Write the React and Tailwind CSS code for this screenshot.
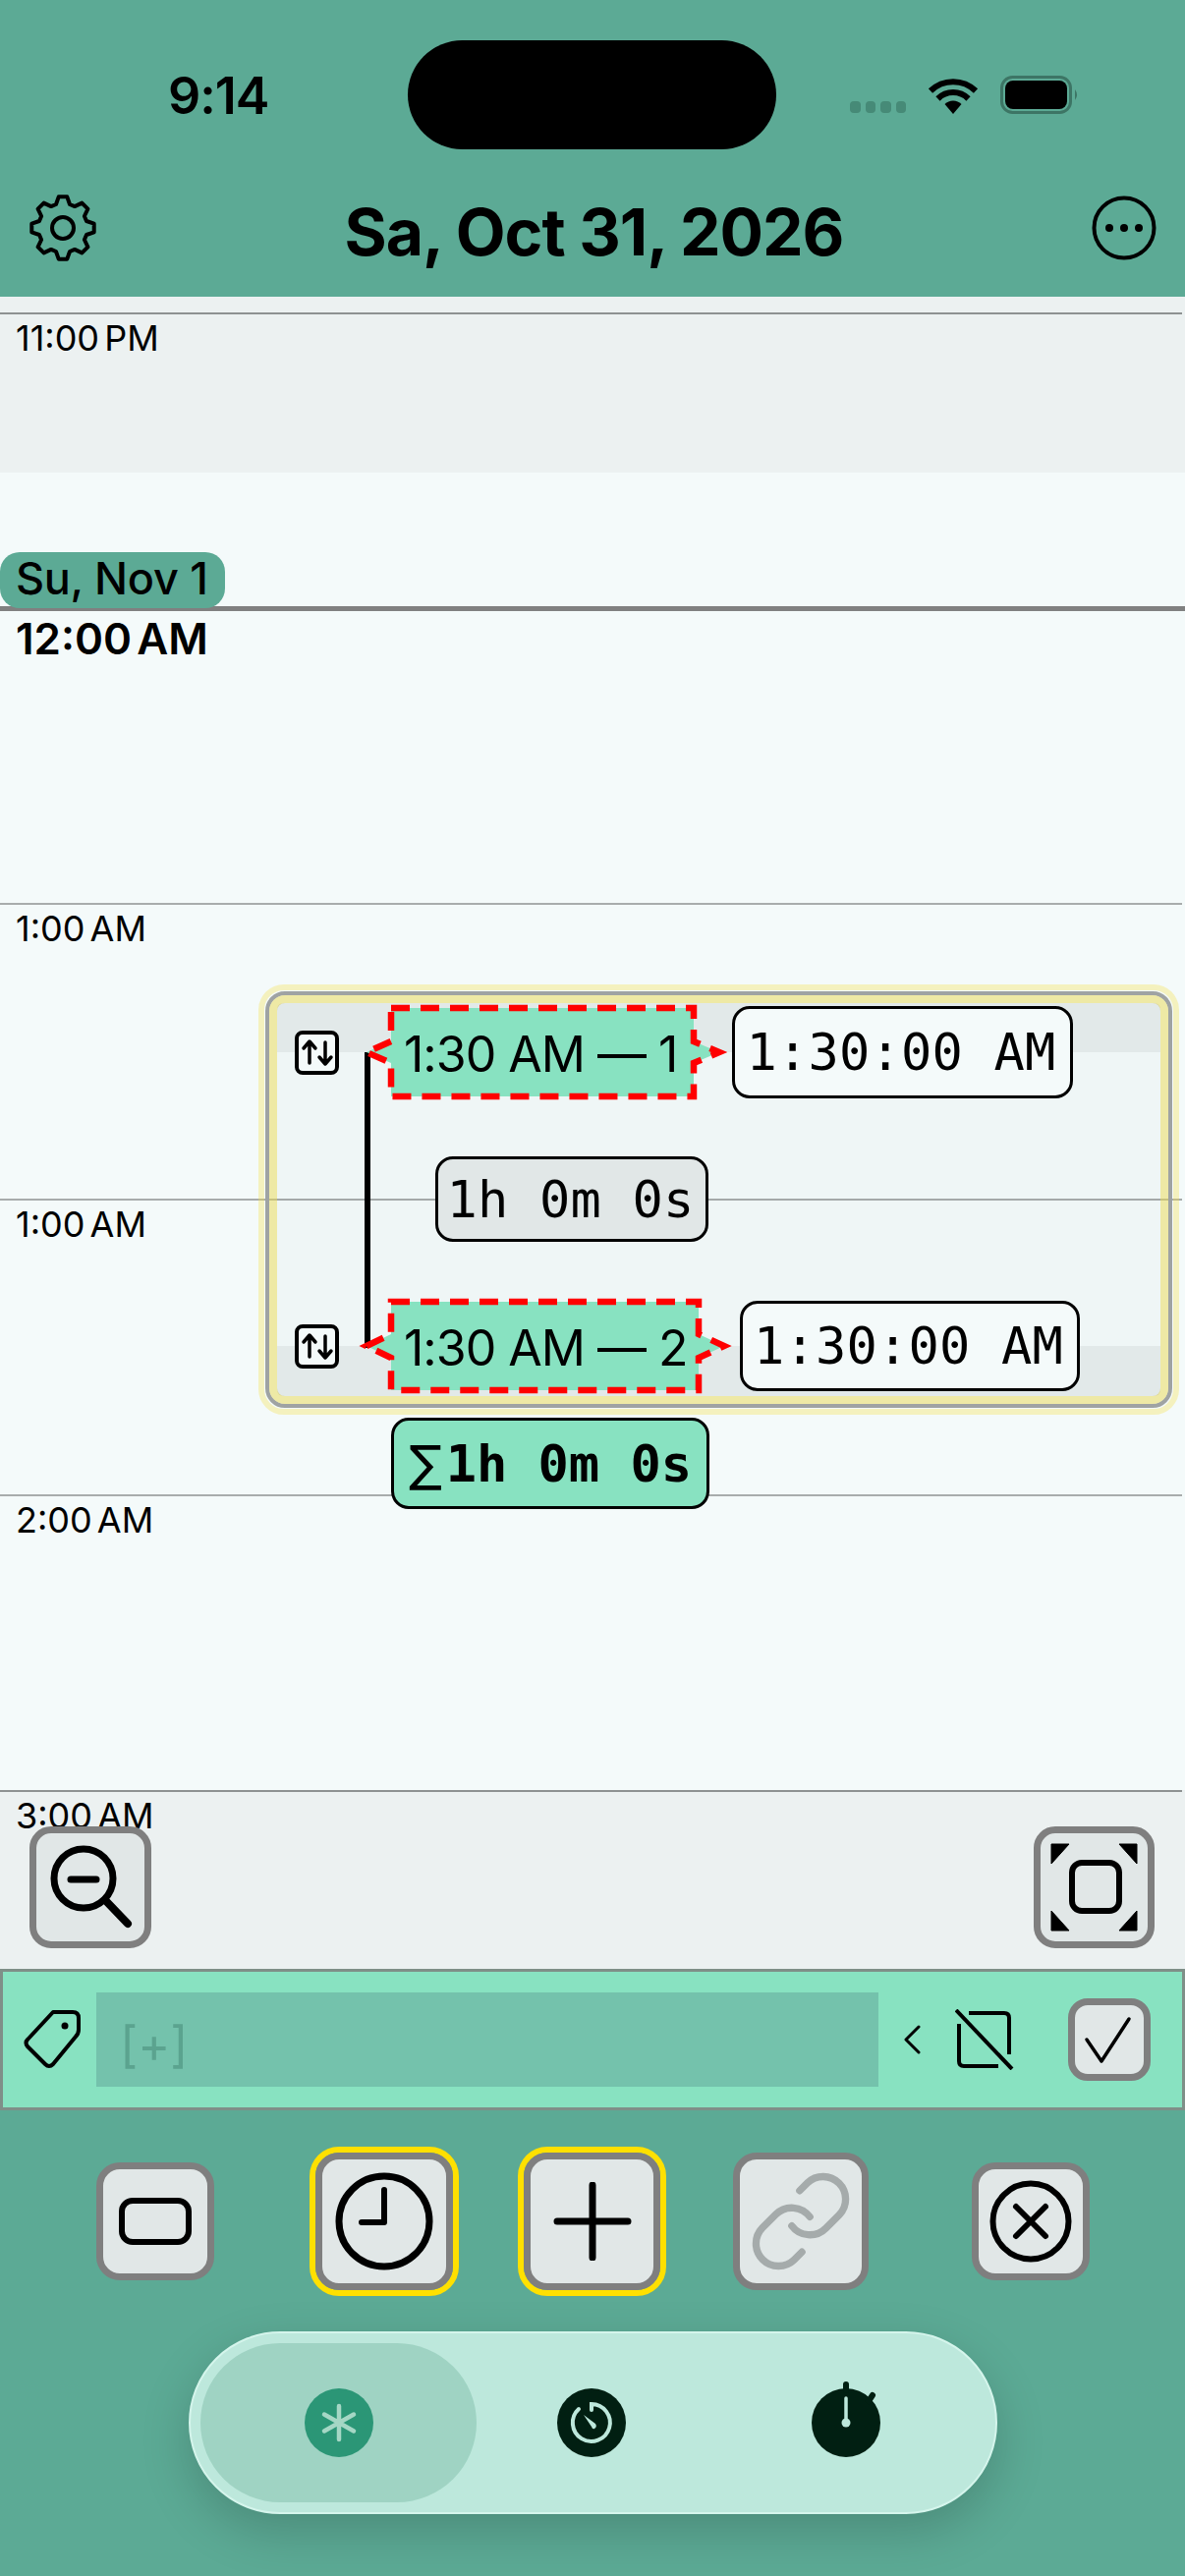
import React from 'react';

const gearPath = () => {
  const pts = [];
  const teeth = 8;
  for (let i = 0; i < teeth; i++) {
    const a = (i / teeth) * Math.PI * 2 - Math.PI / 2;
    const step = (Math.PI * 2) / teeth;
    [[-0.36, 25], [-0.17, 32], [0.17, 32], [0.36, 25]].forEach(([f, r]) => {
      const t = a + f * step;
      pts.push(`${(34 + r * Math.cos(t)).toFixed(1)} ${(34 + r * Math.sin(t)).toFixed(1)}`);
    });
  }
  return 'M' + pts.join(' L') + ' Z';
};

function StatusIcons() {
  return (
    <div className="flex items-end ml-[75px] h-[39px]">
      <div className="flex gap-[5px] mb-[1px]">
        {[0, 1, 2, 3].map((i) => (
          <div key={i} className="w-[10.5px] h-[12px] rounded-[4px] bg-[#468A77]" />
        ))}
      </div>
      <svg width="52" height="37" viewBox="0 0 52 37" className="ml-[22px]">
        <path d="M3 13.5A33 33 0 0 1 49 13.5" fill="none" stroke="black" strokeWidth="6" />
        <path d="M10.5 21.5A22 22 0 0 1 41.5 21.5" fill="none" stroke="black" strokeWidth="6" />
        <path d="M26 37L17.5 27A12 12 0 0 1 34.5 27Z" fill="black" />
      </svg>
      <svg width="82" height="39" viewBox="0 0 82 39" className="ml-[22px]">
        <rect x="1.5" y="1.5" width="70" height="36" rx="11" fill="none" stroke="#3D7565" strokeWidth="3" />
        <rect x="5" y="5" width="63" height="29" rx="8" fill="black" />
        <path d="M76 14Q80 19.500 76 25Z" fill="#3D7565" />
      </svg>
    </div>
  );
}

function Header() {
  return (
    <header className="h-[302px] bg-[#5CAA95] flex flex-col">
      <div className="flex items-center h-[111px] mt-[41px]">
        <div className="w-[415px] pl-[171px] pt-[2px] text-[52px] leading-[60px] font-semibold tracking-[-1px] text-black font-['Inter',sans-serif]">9:14</div>
        <div className="w-[375px] h-[111px] rounded-full bg-black" />
        <StatusIcons />
      </div>
      <div className="flex items-center justify-between pl-[30px] pr-[29px] flex-1 pt-[10px]">
        <svg width="68" height="68" viewBox="0 0 68 68">
          <path d={gearPath()} fill="none" stroke="black" strokeWidth="4" strokeLinejoin="round" />
          <circle cx="34" cy="34" r="11" fill="none" stroke="black" strokeWidth="4" />
        </svg>
        <div className="text-[66px] leading-[70px] font-bold text-black tracking-[-1px] pt-[8px] font-['Inter',sans-serif]">Sa, Oct 31, 2026</div>
        <svg width="66" height="66" viewBox="0 0 66 66">
          <circle cx="33" cy="33" r="30.500" fill="none" stroke="black" strokeWidth="4" />
          <circle cx="18" cy="33" r="4" fill="black" />
          <circle cx="33" cy="33" r="4" fill="black" />
          <circle cx="48" cy="33" r="4" fill="black" />
        </svg>
      </div>
    </header>
  );
}

function HourLabel({ children }) {
  return (
    <div className="pl-[16px] pt-[4px] text-[36px] leading-[40px] text-black [word-spacing:-5px] font-['Inter',sans-serif]">{children}</div>
  );
}

function HourRow({ label, className = 'h-[301px]', children }) {
  return (
    <div className={`relative ${className}`}>
      <div className="w-[1203px] h-[2px] bg-[#A8ACAC]" />
      <HourLabel>{label}</HourLabel>
      {children}
    </div>
  );
}

function SwapIcon() {
  return (
    <div className="w-[45px] h-[45px] rounded-[8px] border-[4px] border-black bg-[#F4FAFA] shrink-0">
      <svg width="37" height="37" viewBox="0 0 37 37" fill="none" stroke="black" strokeWidth="3.500" strokeLinecap="round" strokeLinejoin="round">
        <path d="M11 29V8M5 14L11 7L17 14" />
        <path d="M27 8V29M21 23L27 30L33 23" />
      </svg>
    </div>
  );
}

function SlotLabel({ text, width, tipHalf }) {
  // width = whole shape incl. the two little arrows
  const r = width - 29;
  const tipR = width - 3;
  return (
    <div className="relative h-[96px] shrink-0 ml-[25px]" style={{ width }}>
      <svg className="absolute inset-0 overflow-visible" width={width} height="96" viewBox={`0 0 ${width} 96`}>
        <path
          d={`M28 3H${r}V${48 - tipHalf}L${tipR} 48L${r} ${48 + tipHalf}V93H28V${48 + tipHalf}L3 48L28 ${48 - tipHalf}Z`}
          fill="#88E2C1"
          stroke="#FF0000"
          strokeWidth="6.500"
          strokeDasharray="19 11"
        />
      </svg>
      <div className="relative pl-[41px] pt-[2px] text-[50px] leading-[96px] whitespace-nowrap text-black tracking-[-1px] font-['Inter',sans-serif]">{text}</div>
    </div>
  );
}

function MonoBox({ text, className }) {
  return (
    <div className={`flex items-center justify-center rounded-[18px] border-[3.500px] border-black whitespace-nowrap text-[52px] tracking-[0.2px] text-black font-['DejaVu_Sans_Mono',monospace] ${className}`}>{text}</div>
  );
}

function EventCard() {
  return (
    <div className="absolute left-[263px] top-[700px] w-[937px] flex flex-col">
      <div className="h-[438px] rounded-[26px] border-[6px] border-[rgba(245,225,70,0.33)] p-[1px]">
        <div className="h-full rounded-[20px] border-[4px] border-[#9FA3A3]">
          <div className="h-full rounded-[16px] border-[8px] border-[rgba(232,215,80,0.5)]">
            <div className="relative h-full rounded-[6px] overflow-hidden bg-[rgba(0,40,40,0.018)] flex flex-col justify-between pt-[2px] pb-[3px]">
              <div className="absolute left-0 right-0 top-0 h-[50px] bg-[rgba(0,0,0,0.05)]" />
              <div className="absolute left-0 right-0 bottom-0 h-[51px] bg-[rgba(0,0,0,0.05)]" />
              <div className="absolute left-[89px] top-[50px] w-[6px] h-[301px] bg-black" />
              <div className="relative flex items-center pl-[18px]">
                <SwapIcon />
                <SlotLabel text="1:30 AM — 1" width={365} tipHalf={11} />
                <MonoBox text="1:30:00 AM" className="ml-[10px] w-[347px] h-[94px] pr-[3px] bg-[#F4FAFA]" />
              </div>
              <div className="relative flex">
                <MonoBox text="1h 0m 0s" className="ml-[161px] w-[278px] h-[87px] pr-[3px] bg-[#E1E7E7]" />
              </div>
              <div className="relative flex items-center pl-[18px]">
                <SwapIcon />
                <SlotLabel text="1:30 AM — 2" width={370} tipHalf={12} />
                <MonoBox text="1:30:00 AM" className="ml-[13px] w-[346px] h-[92px] pr-[3px] bg-[#F4FAFA]" />
              </div>
            </div>
          </div>
        </div>
      </div>
      <div className="relative ml-[135px] mt-[3px] w-[324px] h-[93px] flex items-center justify-center rounded-[18px] border-[3.500px] border-black bg-[#88E2C1] whitespace-nowrap text-[52px] font-bold text-black font-['DejaVu_Sans_Mono',monospace]">
        <span className="font-['DejaVu_Sans',sans-serif] font-normal text-[50px] leading-[60px] mr-[4px]">∑</span>1h 0m 0s
      </div>
    </div>
  );
}

function Timeline() {
  return (
    <main className="relative">
      <div className="h-[179px] bg-[#ECF1F1] pt-[16px]">
        <div className="w-[1203px] h-[2px] bg-[#8E9292]" />
        <HourLabel>11:00 PM</HourLabel>
      </div>
      <div className="h-[136px] bg-[#F4FAFA] flex items-end">
        <div className="relative z-10 -mb-[2px] w-[229px] h-[57px] rounded-[20px] bg-[#5CAA95] pl-[16px] text-[45px] leading-[54px] font-medium tracking-[-0.3px] text-black font-['Inter',sans-serif]">Su, Nov 1</div>
      </div>
      <div className="h-[302px] bg-[#F4FAFA]">
        <div className="h-[5px] bg-[#808080]" />
        <div className="pl-[16px] pt-[2px] text-[44px] leading-[52px] font-semibold text-black [word-spacing:-6px] font-['Inter',sans-serif]">12:00 AM</div>
      </div>
      <div className="bg-[#F4FAFA]">
        <HourRow label="1:00 AM" />
        <HourRow label="1:00 AM" />
        <HourRow label="2:00 AM" />
      </div>
      <div className="relative h-[182px] bg-[#ECF1F1]">
        <div className="w-[1203px] h-[2px] bg-[#8E9292]" />
        <HourLabel>3:00 AM</HourLabel>
        <button className="absolute left-[30px] top-[37px] w-[124px] h-[124px] rounded-[22px] border-[7px] border-[#7F7F7F] bg-[#E1E7E7] overflow-hidden">
          <svg className="absolute -left-[7px] -top-[7px]" width="124" height="124" viewBox="0 0 124 124" fill="none" stroke="black" strokeLinecap="round">
            <circle cx="55" cy="53" r="30" strokeWidth="7" />
            <path d="M42 54H68" strokeWidth="7" />
            <path d="M77 75L100 99" strokeWidth="8" />
          </svg>
        </button>
        <button className="absolute left-[1052px] top-[37px] w-[123px] h-[124px] rounded-[22px] border-[7px] border-[#7F7F7F] bg-[#E1E7E7] overflow-hidden">
          <svg className="absolute -left-[7px] -top-[7px]" width="123" height="124" viewBox="0 0 123 124">
            <rect x="39" y="37" width="48" height="49" rx="10" fill="none" stroke="black" strokeWidth="6" />
            <path d="M18 18H36L18 38Z M105 18H87L105 38Z M18 106H36L18 86Z M105 106H87L105 86Z" fill="black" stroke="black" strokeWidth="1" strokeLinejoin="round" />
          </svg>
        </button>
      </div>
      <EventCard />
    </main>
  );
}

function TagBar() {
  return (
    <div className="h-[144px] border-[3px] border-[#7F8F88] bg-[#88E2C1] flex items-center">
      <svg width="60" height="62" viewBox="0 0 60 62" className="ml-[21px] shrink-0" fill="none" stroke="black" strokeWidth="4" strokeLinejoin="round">
        <path d="M30 3H50Q56 3 56 9V21Q56 25 53 28L30 56Q26 60 22 56L4 38Q1 34 4 31Z" />
        <circle cx="42" cy="17" r="3.500" fill="black" stroke="none" />
      </svg>
      <div className="ml-[14px] w-[796px] h-[96px] bg-[#74C2AC] flex items-center pl-[24px] pt-[10px] text-[50px] leading-[60px] text-[#5BA38F] font-['Inter',sans-serif]">[+]</div>
      <svg width="18" height="30" viewBox="0 0 18 30" className="ml-[25px] shrink-0" fill="none" stroke="black" strokeWidth="3" strokeLinecap="round" strokeLinejoin="round">
        <path d="M16 2L3 15L16 28" />
      </svg>
      <svg width="60" height="62" viewBox="0 0 60 62" className="ml-[35px] shrink-0" fill="none" stroke="black" strokeWidth="4">
        <path d="M14 4H50Q55 4 55 9V46" />
        <path d="M44 58H9Q4 58 4 53V15" />
        <path d="M1 1L58 61" />
      </svg>
      <button className="ml-[55px] relative w-[84px] h-[84px] rounded-[20px] border-[7px] border-[#7F7F7F] bg-[#E1E7E7] shrink-0 overflow-hidden">
        <svg className="absolute -left-[7px] -top-[7px]" width="84" height="84" viewBox="0 0 84 84" fill="none" stroke="black" strokeWidth="3.500" strokeLinecap="round" strokeLinejoin="round">
          <path d="M19 42L34 64L62 21" />
        </svg>
      </button>
    </div>
  );
}

function ToolButton({ className, children }) {
  return (
    <button className={`relative rounded-[24px] border-[7px] border-[#7F7F7F] bg-[#E1E7E7] flex items-center justify-center shrink-0 ${className}`}>{children}</button>
  );
}

function YellowRing({ className, children }) {
  return <div className={`rounded-[30px] border-[6px] border-[#FFE000] shrink-0 ${className}`}>{children}</div>;
}

function ToolRow() {
  return (
    <div className="flex items-center h-[152px] mt-[37px] pl-[98px]">
      <ToolButton className="w-[120px] h-[120px]">
        <svg width="74" height="48" viewBox="0 0 74 48" fill="none" stroke="black" strokeWidth="6">
          <rect x="3" y="3" width="68" height="42" rx="11" />
        </svg>
      </ToolButton>
      <YellowRing className="ml-[97px] w-[152px] h-[152px]">
        <ToolButton className="w-[140px] h-[140px]">
          <svg width="102" height="102" viewBox="0 0 102 102" fill="none" stroke="black" strokeLinecap="round" strokeLinejoin="round">
            <circle cx="51" cy="51" r="46" strokeWidth="7" />
            <path d="M51 19V52H28" strokeWidth="6" />
          </svg>
        </ToolButton>
      </YellowRing>
      <YellowRing className="ml-[60px] w-[151px] h-[152px]">
        <ToolButton className="w-[139px] h-[140px]">
          <svg width="80" height="80" viewBox="0 0 80 80" fill="none" stroke="black" strokeWidth="7" strokeLinecap="round">
            <path d="M40 3V77M4 40H76" />
          </svg>
        </ToolButton>
      </YellowRing>
      <ToolButton className="ml-[68px] w-[138px] h-[140px]">
        <svg width="110" height="110" viewBox="0 0 24 24" fill="none" stroke="#A5ABAB" strokeWidth="1.600" strokeLinecap="round" strokeLinejoin="round">
          <path d="M10 13a5 5 0 0 0 7.540.54l3-3a5 5 0 0 0-7.070-7.070l-1.720 1.710" />
          <path d="M14 11a5 5 0 0 0-7.540-.54l-3 3a5 5 0 0 0 7.070 7.070l1.710-1.710" />
        </svg>
      </ToolButton>
      <ToolButton className="ml-[105px] w-[120px] h-[120px]">
        <svg width="84" height="84" viewBox="0 0 84 84" fill="none" stroke="black" strokeWidth="6" strokeLinecap="round">
          <circle cx="42" cy="42" r="38.500" />
          <path d="M27 27L57 57M57 27L27 57" />
        </svg>
      </ToolButton>
    </div>
  );
}

function TabBar() {
  return (
    <div className="mt-[36px] ml-[192px] w-[823px] h-[186px] rounded-[93px] bg-[#BDE8DC] border-[2px] border-[#D5F5EC] shadow-[0_18px_50px_rgba(0,0,0,0.18)] flex items-center pl-[10px] relative">
      <div className="w-[281px] h-[162px] rounded-[81px] bg-[#9FD3C3] flex items-center justify-center shrink-0">
        <svg width="70" height="70" viewBox="0 0 70 70">
          <circle cx="35" cy="35" r="35" fill="#2B9676" />
          <path d="M35 18V52M20 26.500L50 43.500M50 26.500L20 43.500" stroke="#A5D7C5" strokeWidth="4.500" strokeLinecap="round" />
        </svg>
      </div>
      <svg width="70" height="70" viewBox="0 0 70 70" className="ml-[82px] shrink-0">
        <circle cx="35" cy="35" r="35" fill="#011F12" />
        <path d="M35 22V16A19 19 0 1 1 22 21" fill="none" stroke="#BDE8DC" strokeWidth="4" strokeLinecap="round" />
        <path d="M27 27L39 36Q41 39 38 41Q36 42 35 39Z" fill="#BDE8DC" />
      </svg>
      <svg width="74" height="82" viewBox="0 0 74 82" className="ml-[187px] -mt-[12px] shrink-0">
        <circle cx="37" cy="47" r="35" fill="#011F12" />
        <path d="M37 8V14M60 25L64 19" stroke="#011F12" strokeWidth="6" strokeLinecap="round" />
        <path d="M37 22V46" stroke="#BDE8DC" strokeWidth="3.500" strokeLinecap="round" />
        <circle cx="37" cy="47" r="4.500" fill="#BDE8DC" />
      </svg>
    </div>
  );
}

export default function App() {
  return (
    <div className="w-[1206px] h-[2622px] overflow-hidden bg-[#5CAA95] flex flex-col">
      <Header />
      <Timeline />
      <TagBar />
      <ToolRow />
      <TabBar />
    </div>
  );
}
